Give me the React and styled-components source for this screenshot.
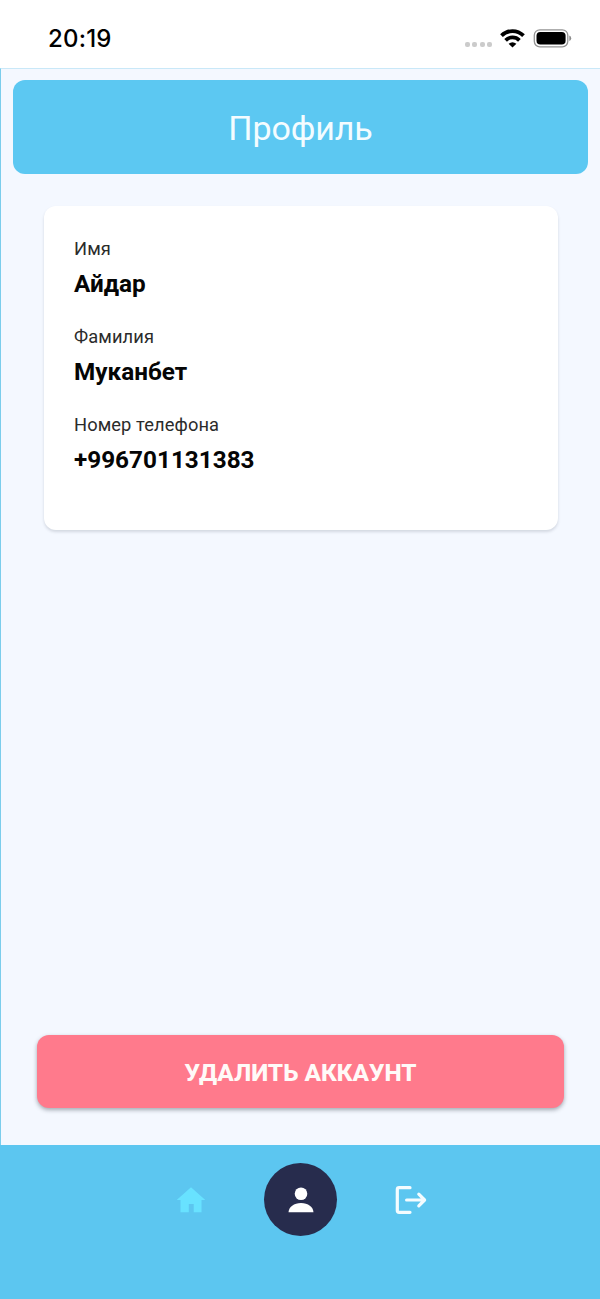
import React from "react";
import styled, { createGlobalStyle } from "styled-components";

const GlobalStyle = createGlobalStyle`
  * {
    box-sizing: border-box;
  }

  body {
    margin: 0;
    background: #ffffff;
    font-family: Roboto, "Liberation Sans", sans-serif;
  }
`;

const Screen = styled.div`
  display: flex;
  flex-direction: column;
  width: 600px;
  height: 1299px;
  overflow: hidden;
`;

const StatusBar = styled.div`
  display: flex;
  align-items: center;
  justify-content: space-between;
  height: 68px;
  padding: 8px 28px 0 48px;
  background: #ffffff;
`;

const Time = styled.span`
  padding-top: 2px;
  font-family: Inter, sans-serif;
  font-size: 24px;
  font-weight: 500;
  line-height: 30px;
  letter-spacing: 0.2px;
  color: #000000;
`;

const StatusIcons = styled.div`
  display: flex;
  align-items: center;
`;

const SignalDots = styled.div`
  display: flex;
  gap: 2.4px;
  margin: 13px 8px 0 0;
`;

const Dot = styled.span`
  width: 5px;
  height: 5px;
  border-radius: 2px;
  background: #cbcbcb;
`;

const WifiIcon = styled.svg`
  display: block;
  margin-right: 8px;
`;

const Content = styled.main`
  display: flex;
  flex-direction: column;
  flex: 1;
  padding: 11px 12px 37px;
  background: #f4f8ff;
  border-top: 1px solid #c9e8f8;
  border-left: 1px solid #7bcdec;
`;

const Header = styled.header`
  display: flex;
  align-items: center;
  justify-content: center;
  height: 94px;
  border-radius: 12px;
  background: #5cc8f2;
`;

const Title = styled.h1`
  margin: 0;
  padding-top: 2px;
  font-size: 34px;
  font-weight: 400;
  line-height: 40px;
  letter-spacing: -0.1px;
  color: #f4fcff;
`;

const Card = styled.section`
  display: flex;
  flex-direction: column;
  gap: 24px;
  height: 324px;
  margin: 32px 30px 0 31px;
  padding: 31px 30px;
  border-radius: 12px;
  background: #ffffff;
  box-shadow: 0 2px 3px rgba(60, 70, 90, 0.18);
`;

const Label = styled.div`
  font-size: 18.3px;
  line-height: 24px;
  letter-spacing: 0.1px;
  color: #2b2b2b;
`;

const Value = styled.div`
  margin-top: 6px;
  font-size: 24.3px;
  font-weight: 700;
  line-height: 34px;
  color: #050505;
`;

const DeleteButton = styled.button`
  height: 73px;
  margin: auto 24px 0;
  padding: 1px 0 0;
  border: none;
  border-radius: 12px;
  background: #ff7a8c;
  box-shadow: 0 2px 4px rgba(40, 50, 60, 0.4);
  font-family: inherit;
  font-size: 24.4px;
  font-weight: 800;
  color: #fffaf8;
`;

const TabBar = styled.nav`
  display: flex;
  justify-content: center;
  height: 154px;
  padding: 18px 0 0 1px;
  background: #5cc6f0;
`;

const Tab = styled.button`
  display: flex;
  align-items: center;
  justify-content: center;
  width: 73px;
  height: 73px;
  margin: 0 18.5px;
  padding: 0;
  border: none;
  border-radius: 50%;
  background: ${({ $active }) => ($active ? "#272c4d" : "transparent")};
  color: ${({ $color }) => $color};
`;

const profile = [
  { label: "Имя", value: "Айдар" },
  { label: "Фамилия", value: "Муканбет" },
  { label: "Номер телефона", value: "+996701131383" },
];

const HomeIcon = () => (
  <svg width="30" height="26" viewBox="0 0 30 26" fill="currentColor">
    <path d="M15 0.3 29.3 13H25.5V25.3H17.7V17H12.8V25.3H4.5V13H0.7Z" />
  </svg>
);

const PersonIcon = () => (
  <svg width="26" height="26" viewBox="0 0 26 26" fill="currentColor">
    <circle cx="13" cy="6.8" r="6.3" />
    <path d="M0.5 25.3C0.7 20 6 16 13 16S25.3 20 25.5 25.3Z" />
  </svg>
);

const ExitIcon = () => (
  <svg
    width="32"
    height="30"
    viewBox="0 0 32 30"
    fill="none"
    stroke="currentColor"
    strokeWidth="3.2"
    strokeLinecap="round"
    strokeLinejoin="round"
  >
    <path d="M15 2.7H4.1Q2.3 2.7 2.3 4.5V25.5Q2.3 27.3 4.1 27.3H15" />
    <path d="M11.6 15H29.2M23.8 9.2 29.6 15 23.8 20.8" />
  </svg>
);

function App() {
  return (
    <>
      <GlobalStyle />
      <Screen>
        <StatusBar>
          <Time>20:19</Time>
          <StatusIcons>
            <SignalDots>
              <Dot />
              <Dot />
              <Dot />
              <Dot />
            </SignalDots>
            <WifiIcon width="25" height="19" viewBox="0 0 25 19" fill="none" stroke="#000" strokeWidth="3.8">
              <path d="M1.5 6.7C7.7 0.5 17.3 0.5 23.5 6.7" />
              <path d="M5.6 11.3C9.4 7.5 15.6 7.5 19.4 11.3" />
              <path d="M12.5 18.6 8.6 14.8Q12.5 11.7 16.4 14.8Z" fill="#000" stroke="none" />
            </WifiIcon>
            <svg width="39" height="19" viewBox="0 0 39 19">
              <rect x="1.3" y="0.8" width="33.5" height="17" rx="5.5" fill="none" stroke="#949494" strokeWidth="1.3" />
              <rect x="3.5" y="3" width="29.1" height="12.6" rx="3.8" fill="#000" />
              <path d="M36.3 6.5Q38.2 7.3 38.2 9.3T36.3 12.1Z" fill="#8c8c8c" />
            </svg>
          </StatusIcons>
        </StatusBar>

        <Content>
          <Header>
            <Title>Профиль</Title>
          </Header>
          <Card>
            {profile.map((item) => (
              <div key={item.label}>
                <Label>{item.label}</Label>
                <Value>{item.value}</Value>
              </div>
            ))}
          </Card>
          <DeleteButton>УДАЛИТЬ АККАУНТ</DeleteButton>
        </Content>

        <TabBar>
          <Tab $color="#68e2ff">
            <HomeIcon />
          </Tab>
          <Tab $active $color="#ffffff">
            <PersonIcon />
          </Tab>
          <Tab $color="#f4fcff">
            <ExitIcon />
          </Tab>
        </TabBar>
      </Screen>
    </>
  );
}

export default App;
